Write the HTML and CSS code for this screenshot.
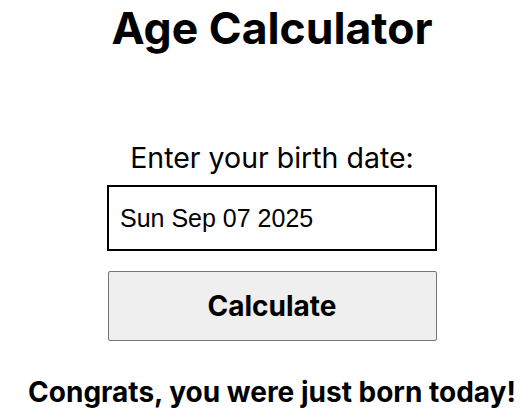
FILE: index.html
```html
<!DOCTYPE html>
<html>
<head>
<meta charset="utf-8">
<link rel="stylesheet" href="styles.css">
</head>
<body>
<main class="app">
  <h1 class="title">Age Calculator</h1>
  <label class="label" for="birth">Enter your birth date:</label>
  <div class="date-input" id="birth">Sun Sep 07 2025</div>
  <button class="calc-btn">Calculate</button>
  <p class="result">Congrats, you were just born today!</p>
</main>
</body>
</html>
```
FILE: styles.css
```css
html, body {
  margin: 0;
  padding: 0;
  background: #fff;
}
.app {
  display: flex;
  flex-direction: column;
  align-items: center;
  padding-left: 12px;
  font-family: Inter, "Liberation Sans", sans-serif;
  color: #000;
}
.title {
  margin: 0;
  font-size: 44.5px;
  font-weight: 700;
  line-height: 56px;
}
.label {
  margin-top: 84px;
  font-size: 28.5px;
  line-height: 36px;
}
.date-input {
  box-sizing: border-box;
  margin-top: 9px;
  width: 330px;
  height: 66px;
  border: 2px solid #000;
  padding: 0 11px;
  display: flex;
  align-items: center;
  font-family: "Liberation Sans", Arial, sans-serif;
  font-size: 25px;
}
.calc-btn {
  box-sizing: border-box;
  margin-top: 20px;
  width: 329px;
  height: 70px;
  background: #efefef;
  border: 1px solid #767676;
  border-radius: 2px;
  font-family: Inter, "Liberation Sans", sans-serif;
  font-size: 28px;
  font-weight: 700;
  color: #000;
}
.result {
  margin: 34px 0 0;
  font-size: 28px;
  font-weight: 700;
  line-height: 34px;
}
```
